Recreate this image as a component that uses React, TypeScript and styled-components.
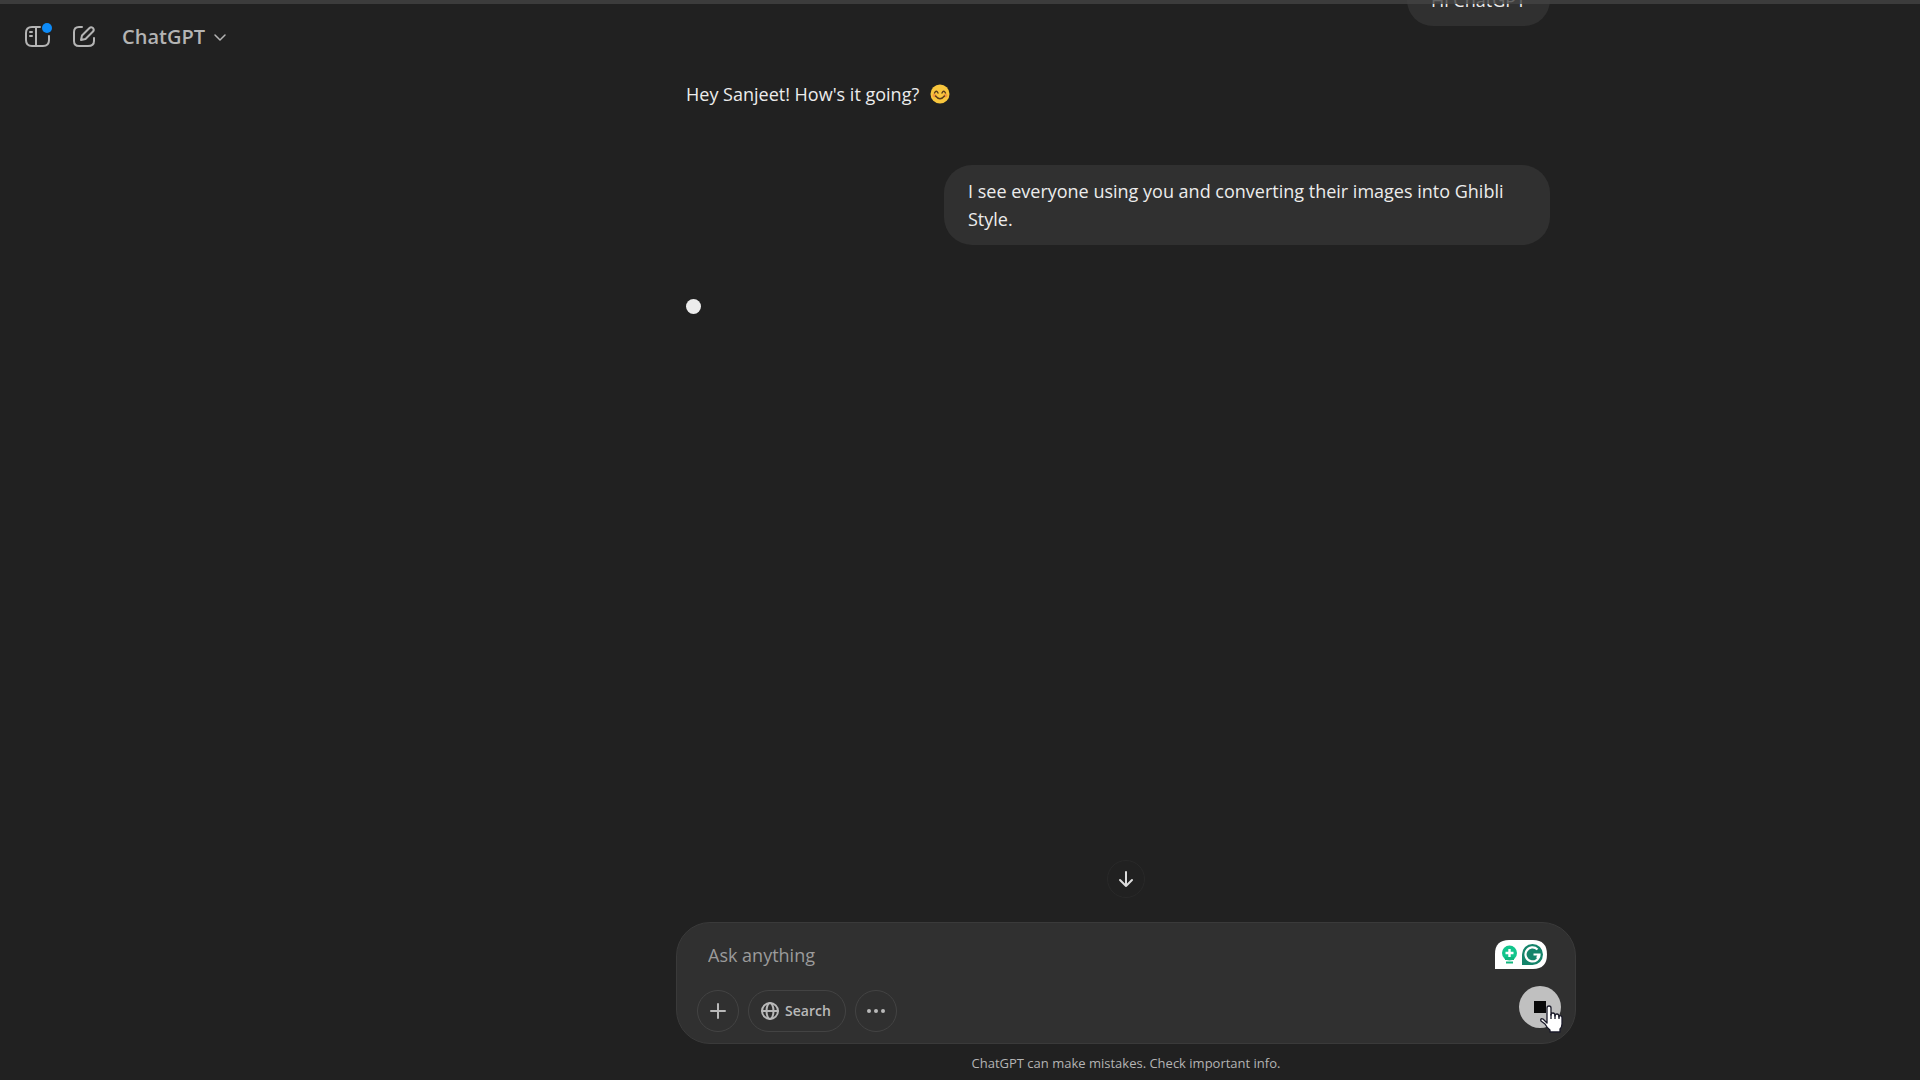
import React from "react";
import styled, { createGlobalStyle } from "styled-components";

const GlobalStyle = createGlobalStyle`
  *, *::before, *::after { box-sizing: border-box; }
  body {
    margin: 0;
    background: #212121;
    color: #ececec;
    font-family: "Segoe UI", "Open Sans", "Noto Sans", sans-serif;
    font-size: 18px;
    line-height: 28px;
  }
  button, textarea { font: inherit; color: inherit; }
  svg { display: block; flex: none; }
`;

const Page = styled.div`
  display: flex;
  height: 100vh;
  overflow: hidden;
`;

const TopEdge = styled.div`
  position: absolute;
  inset: 0 0 auto;
  height: 4px;
  background: rgba(68, 68, 68, 0.8);
`;

const Header = styled.header`
  display: flex;
  align-items: center;
  align-self: flex-start;
  flex: none;
  width: 332px;
  gap: 14px;
  padding: 21px 0 0 22px;
  color: #b4b4b4;
`;

const IconButton = styled.button`
  display: flex;
  padding: 2px;
  border: 0;
  background: none;
`;

const ModelButton = styled.button`
  display: flex;
  align-items: center;
  gap: 8px;
  margin-left: 4px;
  padding: 0 4px;
  border: 0;
  background: none;
  font-size: 20px;
  font-weight: 600;
  line-height: 32px;
`;

const Main = styled.main`
  display: flex;
  flex: 1;
  flex-direction: column;
  align-items: center;
  min-width: 0;
`;

const Thread = styled.section`
  display: flex;
  flex: 1;
  flex-direction: column;
  width: 100%;
  max-width: 900px;
  min-height: 0;
  padding: 0 26px 0 10px;
  margin-top: -26px;
`;

const UserMessage = styled.p`
  align-self: flex-end;
  max-width: 606px;
  margin: 0;
  padding: 12px 24px;
  border-radius: 28px;
  background: #303030;
`;

const AssistantMessage = styled.div`
  display: flex;
  align-items: center;
  gap: 11px;
  margin: 54px 0 57px;
`;

const TypingDot = styled.span`
  width: 15px;
  height: 15px;
  border-radius: 50%;
  background: #ececec;
`;

const ScrollButton = styled.button`
  display: grid;
  place-items: center;
  width: 38px;
  height: 38px;
  margin-bottom: 24px;
  padding: 0;
  border: 1px solid #292929;
  border-radius: 50%;
  background: #212121;
  color: #dcdcdc;
`;

const Composer = styled.form`
  display: flex;
  flex-direction: column;
  gap: 17px;
  width: 100%;
  max-width: 900px;
  padding: 17px 14px 11px 20px;
  border: 1px solid #3a3a3a;
  border-radius: 34px;
  background: #303030;
`;

const InputRow = styled.div`
  display: flex;
  align-items: center;
  padding: 0 14px 0 11px;
`;

const Prompt = styled.textarea`
  flex: 1;
  height: 28px;
  padding: 0;
  border: 0;
  outline: 0;
  background: none;
  resize: none;
  overflow: hidden;
  &::placeholder { color: #9b9b9b; opacity: 1; }
`;

const ToolRow = styled.div`
  display: flex;
  align-items: flex-end;
  gap: 9px;
`;

const ToolButton = styled.button<{ $wide?: boolean }>`
  display: flex;
  align-items: center;
  justify-content: center;
  gap: 6px;
  width: ${(p) => (p.$wide ? "auto" : "42px")};
  height: 42px;
  padding: ${(p) => (p.$wide ? "0 14px 0 12px" : "0")};
  border: 1px solid #434343;
  border-radius: 21px;
  background: none;
  color: #b9b9b9;
  font-size: 14px;
  font-weight: 600;
`;

const StopButton = styled.button`
  position: relative;
  display: grid;
  place-items: center;
  width: 42px;
  height: 42px;
  margin: 0 0 4px auto;
  padding: 0;
  border: 0;
  border-radius: 50%;
  background: #c0c0c0;
`;

const StopMark = styled.span`
  width: 12px;
  height: 12px;
  background: #0a0a0a;
`;

const Pointer = styled.svg`
  position: absolute;
  top: 18px;
  left: 20px;
`;

const Notice = styled.footer`
  padding: 5px 0 3px;
  color: #b4b4b4;
  font-size: 13px;
`;

const stroke = {
  fill: "none",
  stroke: "currentColor",
  strokeWidth: 2,
  strokeLinecap: "round",
  strokeLinejoin: "round",
} as const;

const SidebarIcon = () => (
  <svg width="28" height="28" viewBox="0 0 28 28" {...stroke}>
    <path d="M16 4H8Q2 4 2 10V17Q2 23 8 23H19Q25 23 25 17V13" />
    <path d="M12 4V23" />
    <path d="M6 9H8M6 13H8" />
    <circle cx="23" cy="5" r="5" fill="#0d8bf8" stroke="none" />
  </svg>
);

const NewChatIcon = () => (
  <svg width="28" height="28" viewBox="0 0 28 28" {...stroke}>
    <path d="M12 4H9Q4 4 4 9V18Q4 23 9 23H18Q24 23 24 18V15" />
    <path d="M11 17L12 12.500L19.500 5Q21 3.500 23 5Q24.500 7 23 8.500L15.500 16Z" />
  </svg>
);

const SmileIcon = () => (
  <svg width="20" height="20" viewBox="0 0 20 20" role="img" aria-label="smiling face">
    <circle cx="10" cy="10" r="9.500" fill="#f8c63d" />
    <circle cx="4.500" cy="11.500" r="2" fill="#f39a3d" />
    <circle cx="15.500" cy="11.500" r="2" fill="#f39a3d" />
    <path d="M4.500 9Q6.300 5.500 8 9M12 9Q13.700 5.500 15.500 9M5.500 12Q10 17.500 14.500 12" fill="none" stroke="#5a3c1c" strokeWidth="1.400" strokeLinecap="round" />
  </svg>
);

const GrammarlyBadge = () => (
  <svg width="52" height="29" viewBox="0 0 52 29" role="img" aria-label="Grammarly">
    <path d="M0 29V14Q0 0 14 0H38Q52 0 52 14.500T38 29Z" fill="#fff" />
    <circle cx="14.500" cy="13" r="7.500" fill="#12c58c" />
    <path d="M10 17H19V20H10ZM11 21.500H18V23.500H11Z" fill="#12b67f" />
    <path d="M14.500 9V17M10.500 13H18.500" stroke="#fff" strokeWidth="2.400" />
    <path d="M27 25V14.500A10.500 10.500 0 1 1 37.500 25Z" fill="#15846b" />
    <path d="M42.500 9.500A7 7 0 1 0 44.500 14.500H38.500M44.500 14.500L42 18" fill="none" stroke="#fff" strokeWidth="2.200" />
  </svg>
);

const PointerHand = () => (
  <Pointer width="26" height="30" viewBox="0 0 26 30" aria-hidden="true">
    <path
      d="M8 19V4Q8 2 10 2Q12 2 12 4V11Q12 9 14 9Q16 9 16 12Q16 10 18 10Q20 10 20 13Q20 11 22 12Q23 12 23 14V20Q23 23 21 25V28H11V26Q8 24 6 20L2 17Q1 14 4 15Z"
      fill="#fff"
      stroke="#1b1b2a"
      strokeWidth="1.300"
      strokeLinejoin="round"
    />
    <path d="M12 10V15M16 11V15M20 12V15" stroke="#1b1b2a" strokeWidth="1.300" />
  </Pointer>
);

export default function App() {
  return (
    <Page>
      <GlobalStyle />
      <Header>
        <IconButton aria-label="Open sidebar"><SidebarIcon /></IconButton>
        <IconButton aria-label="New chat"><NewChatIcon /></IconButton>
        <ModelButton>
          ChatGPT
          <svg width="14" height="14" viewBox="0 0 14 14" {...stroke} strokeWidth={1.5}>
            <path d="M2 5L7 10L12 5" />
          </svg>
        </ModelButton>
      </Header>
      <Main>
        <Thread>
          <UserMessage>Hi ChatGPT</UserMessage>
          <AssistantMessage>
            Hey Sanjeet! How's it going? <SmileIcon />
          </AssistantMessage>
          <UserMessage>
            I see everyone using you and converting their images into Ghibli Style.
          </UserMessage>
          <AssistantMessage>
            <TypingDot role="status" aria-label="Responding" />
          </AssistantMessage>
        </Thread>
        <ScrollButton aria-label="Scroll to bottom">
          <svg width="20" height="20" viewBox="0 0 20 20" {...stroke}>
            <path d="M10 3V17M4 11L10 17L16 11" />
          </svg>
        </ScrollButton>
        <Composer onSubmit={(e) => e.preventDefault()}>
          <InputRow>
            <Prompt aria-label="Message" placeholder="Ask anything" rows={1} />
            <GrammarlyBadge />
          </InputRow>
          <ToolRow>
            <ToolButton type="button" aria-label="Add">
              <svg width="18" height="18" viewBox="0 0 18 18" {...stroke}>
                <path d="M9 2V16M2 9H16" />
              </svg>
            </ToolButton>
            <ToolButton type="button" $wide>
              <svg width="18" height="18" viewBox="0 0 18 18" {...stroke}>
                <circle cx="9" cy="9" r="8" />
                <ellipse cx="9" cy="9" rx="3.500" ry="8" />
                <path d="M1 9H17" />
              </svg>
              Search
            </ToolButton>
            <ToolButton type="button" aria-label="More">
              <svg width="20" height="20" viewBox="0 0 20 20" fill="currentColor">
                <circle cx="3" cy="10" r="2" />
                <circle cx="10" cy="10" r="2" />
                <circle cx="17" cy="10" r="2" />
              </svg>
            </ToolButton>
            <StopButton type="button" aria-label="Stop">
              <StopMark />
              <PointerHand />
            </StopButton>
          </ToolRow>
        </Composer>
        <Notice>ChatGPT can make mistakes. Check important info.</Notice>
      </Main>
      <TopEdge />
    </Page>
  );
}
